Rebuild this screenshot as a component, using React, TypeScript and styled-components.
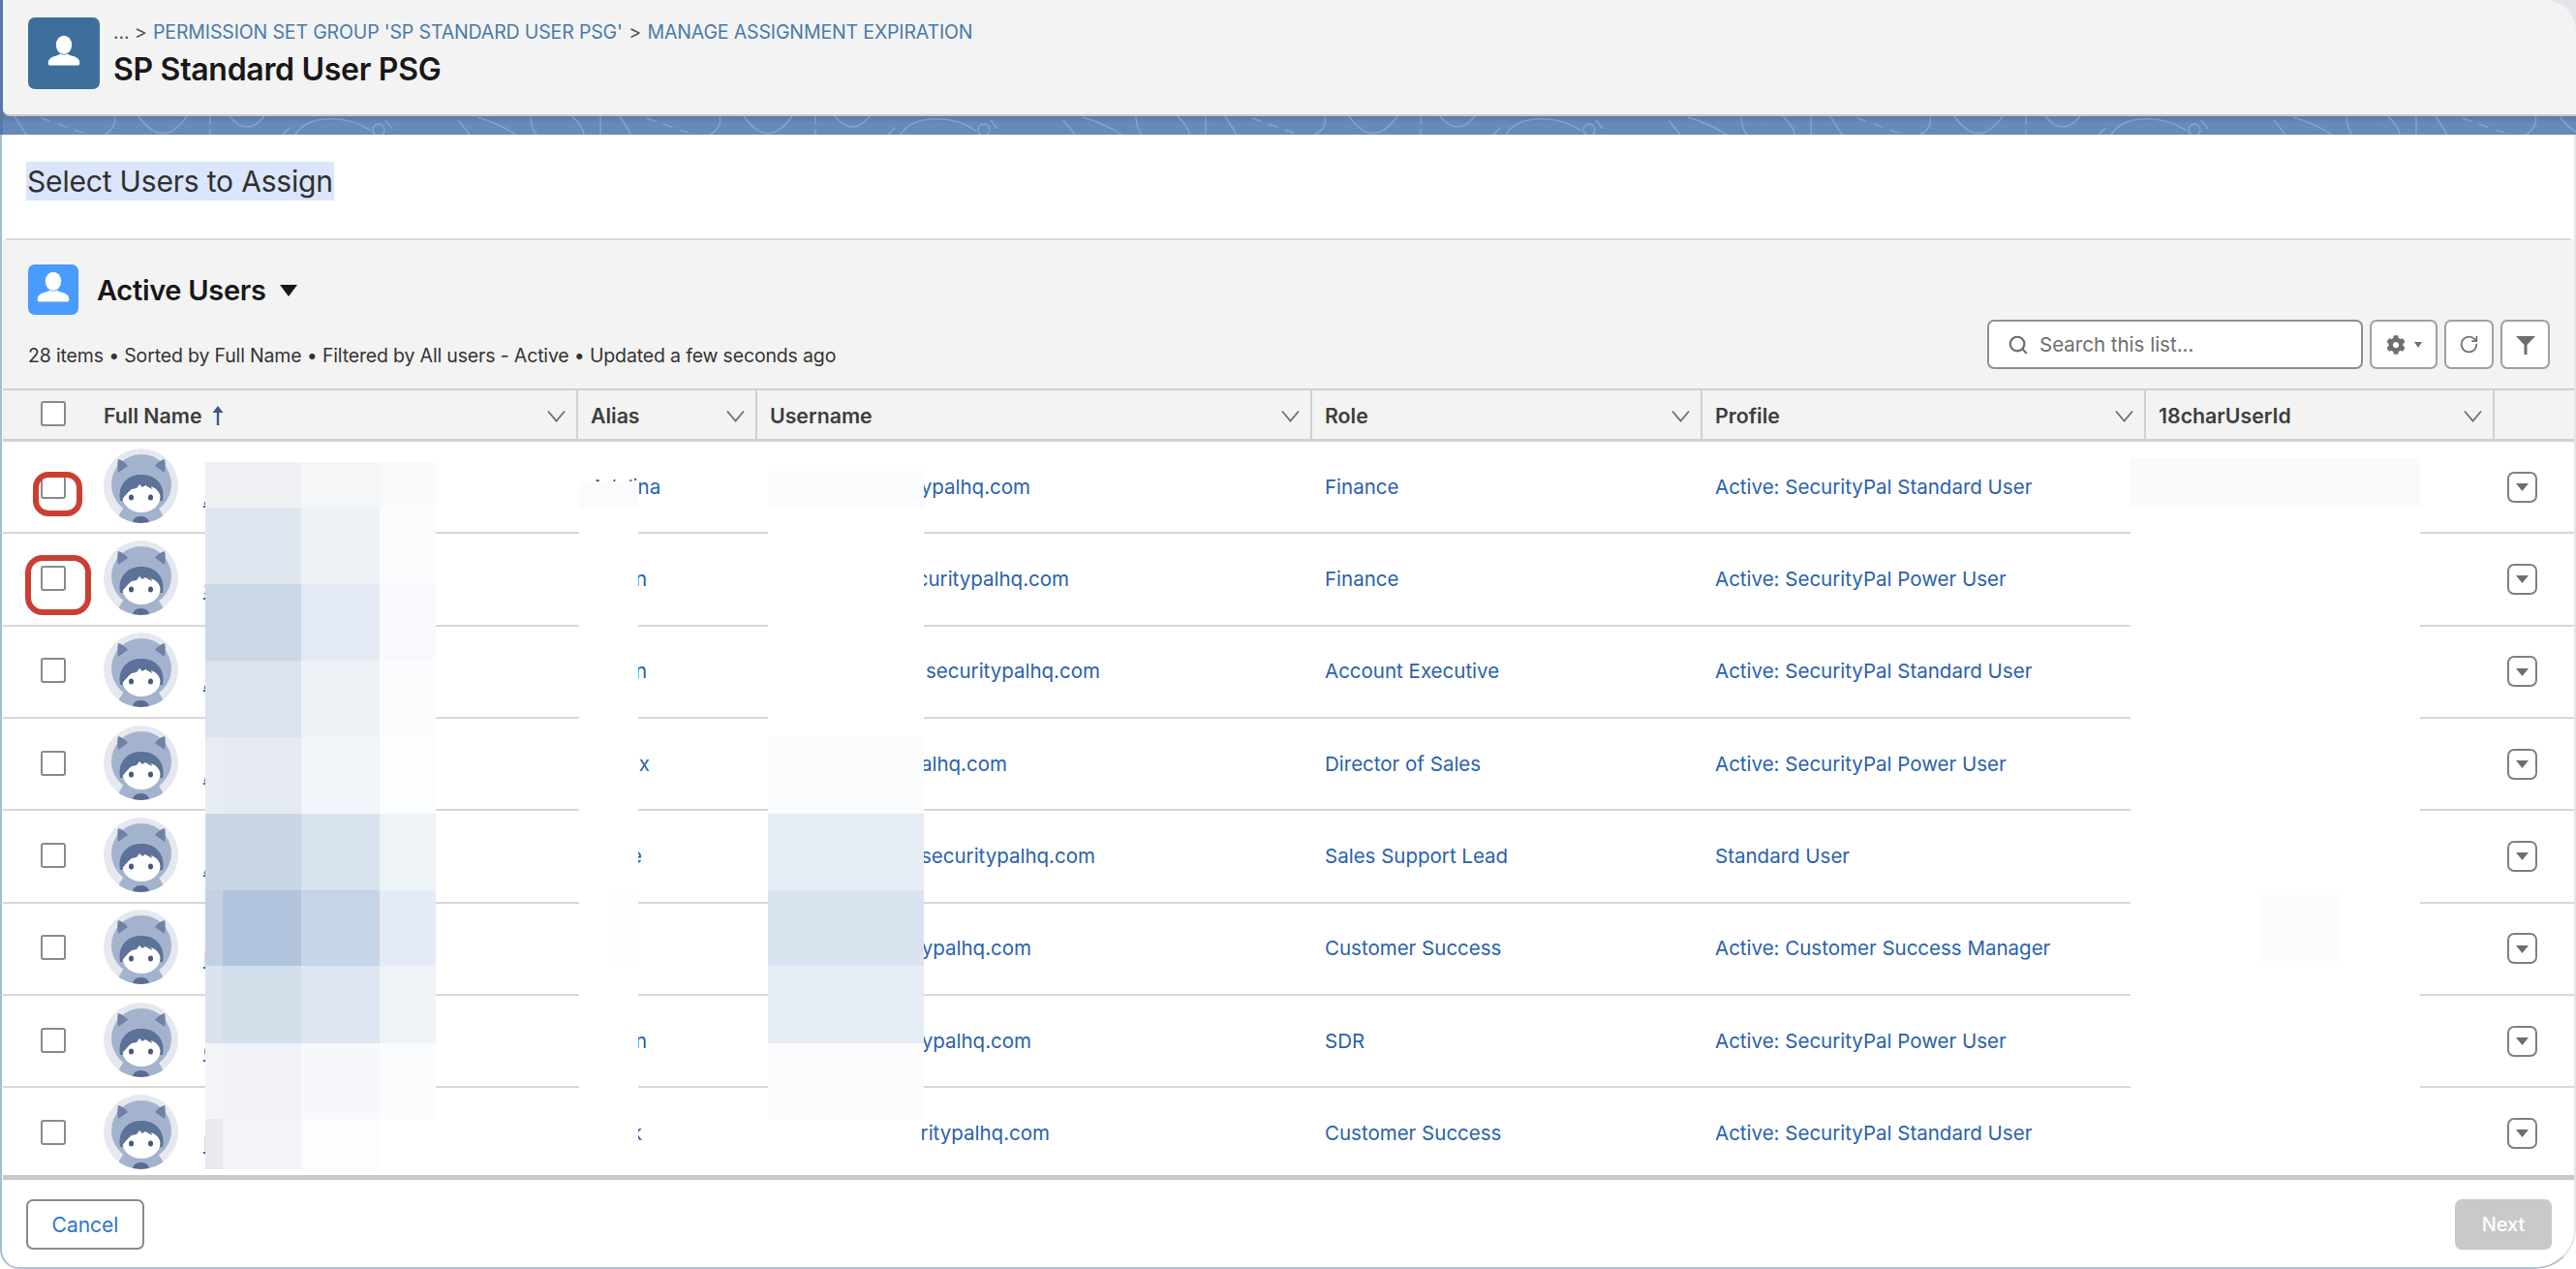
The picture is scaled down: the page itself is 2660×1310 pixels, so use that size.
import * as React from 'react';
import styled, { createGlobalStyle } from 'styled-components';
import { Search, RotateCw } from 'lucide-react';
import { FaCog } from 'react-icons/fa';

const COLUMNS = '94px 500px 185px 573px 403px 458px 360px 1fr';

const GlobalStyle = createGlobalStyle`
  html, body {
    margin: 0;
    padding: 0;
    background: #fff;
  }
  * {
    box-sizing: border-box;
  }
`;

const Page = styled.div`
  position: relative;
  width: 2660px;
  height: 1310px;
  overflow: hidden;
  background: #fff;
  font-family: Inter, 'Liberation Sans', sans-serif;
  color: #181818;
`;

const Band = styled.div`
  border-left: 3px solid #5478aa;
  background: linear-gradient(to bottom, #e4e4ea 0, #e4e4ea 40px, #5a7cab 40px);
`;

const PageHeader = styled.header`
  display: flex;
  gap: 14px;
  height: 120px;
  padding: 18px 0 0 26px;
  background: #f3f3f3;
  border-bottom: 2px solid #c9c9c9;
  border-radius: 0 32px 0 7px;
`;

const RecordIcon = styled.div`
  display: flex;
  align-items: center;
  justify-content: center;
  width: 74px;
  height: 74px;
  border-radius: 7px;
  background: #3e6f9b;
`;

const HeaderText = styled.div`
  display: flex;
  flex-direction: column;
  gap: 9px;
  padding-top: 3px;
`;

const Crumbs = styled.div`
  display: flex;
  gap: 6.5px;
  font-size: 19.5px;
  line-height: 24px;
  color: #555;
  letter-spacing: -0.14px;
`;

const CrumbLink = styled.span`
  color: #4a7aa8;
`;

const PageTitle = styled.h1`
  margin: 0;
  font-size: 32px;
  line-height: 36px;
  font-weight: 600;
  letter-spacing: -0.3px;
`;

const Strip = styled.svg`
  display: block;
  width: 100%;
  height: 19px;
  background: linear-gradient(to bottom, #587aa6, #678abb 40%);
`;

const Main = styled.main`
  display: flex;
  flex-direction: column;
  height: 1171px;
  border-left: 2px solid #a8bbd8;
  border-right: 2px solid #e4e4ea;
  border-bottom: 2px solid #b5c1d8;
  border-radius: 0 0 42px 20px;
  overflow: hidden;
`;

const HeadingRow = styled.div`
  display: flex;
  align-items: center;
  flex: none;
  height: 107px;
  padding: 0 0 11px 25px;
`;

const Heading = styled.h2`
  margin: 0;
  height: 40px;
  padding: 0 1px;
  background: #dbe5fb;
  color: #303030;
  font-size: 30px;
  line-height: 40px;
  font-weight: 400;
  letter-spacing: -0.18px;
`;

const ListCard = styled.section`
  display: flex;
  flex-direction: column;
  flex: 1;
  min-height: 0;
  margin-left: 1px;
  border-top: 2px solid #d8d8d8;
  border-radius: 6px 6px 0 0;
`;

const ListTop = styled.div`
  display: flex;
  flex-direction: column;
  justify-content: space-between;
  flex: none;
  height: 153px;
  padding: 25px 25px 20px 26px;
  background: #f3f3f3;
`;

const TitleRow = styled.div`
  display: flex;
  align-items: center;
`;

const ListIcon = styled.div`
  display: flex;
  align-items: center;
  justify-content: center;
  width: 52px;
  height: 52px;
  margin-right: 19px;
  border-radius: 7px;
  background: #4a9bff;
`;

const ListName = styled.div`
  font-size: 29px;
  font-weight: 600;
  letter-spacing: -0.3px;
  margin-right: 14px;
`;

const Caret = styled.svg<{ $size: number }>`
  display: block;
  width: ${(p) => p.$size}px;
  height: ${(p) => p.$size}px;
`;

const MetaRow = styled.div`
  display: flex;
  align-items: flex-end;
  justify-content: space-between;
`;

const Meta = styled.div`
  font-size: 19.5px;
  line-height: 28px;
  color: #333;
  letter-spacing: -0.16px;
`;

const Tools = styled.div`
  display: flex;
  gap: 7px;
`;

const SearchBox = styled.div`
  display: flex;
  align-items: center;
  gap: 11px;
  width: 388px;
  height: 51px;
  padding-left: 19px;
  background: #fff;
  border: 2px solid #8f8f8f;
  border-radius: 7px;
  color: #706e6b;
  font-size: 20.500px;
`;

const ToolButton = styled.div<{ $width: number }>`
  display: flex;
  align-items: center;
  justify-content: center;
  gap: 9px;
  width: ${(p) => p.$width}px;
  height: 51px;
  background: #fff;
  border: 2px solid #a0a0a0;
  border-radius: 7px;
  color: #706e6b;
`;

const TableHead = styled.div`
  display: grid;
  grid-template-columns: ${COLUMNS};
  flex: none;
  height: 55px;
  background: #f3f3f3;
  border-top: 2px solid #d0d0d0;
  border-bottom: 3px solid #d0d0d0;
`;

const HeadCell = styled.div<{ $plain?: boolean; $first?: boolean }>`
  display: flex;
  align-items: center;
  justify-content: space-between;
  padding: 2px 11px 0 ${(p) => (p.$first ? 10 : 13)}px;
  border-right: ${(p) => (p.$plain ? 'none' : '2px solid #d0d0d0')};
  font-size: 21.300px;
  font-weight: 600;
  color: #3e3e3c;
`;

const HeadLabel = styled.span`
  display: flex;
  align-items: center;
  gap: 9px;
`;

const CheckCell = styled.div`
  display: flex;
  align-items: center;
  justify-content: center;
  padding-left: 10px;
`;

const Checkbox = styled.span`
  display: block;
  width: 26px;
  height: 26px;
  margin-top: -2px;
  background: #fff;
  border: 2px solid #8a8a8a;
  border-radius: 3px;
`;

const TableBody = styled.div`
  flex: none;
  height: 757px;
  overflow: hidden;
`;

const Row = styled.div`
  display: grid;
  grid-template-columns: ${COLUMNS};
  height: 95.33px;
  border-bottom: 2px solid #d8d8d8;
`;

const NameCell = styled.div`
  display: flex;
  align-items: center;
  gap: 26px;
  padding-left: 10px;
`;

const AvatarArt = styled.svg`
  display: block;
  width: 77px;
  height: 77px;
  flex: none;
  margin-top: -3px;
`;

const NameLink = styled.span`
  margin-top: 22px;
  font-size: 20px;
  color: #2a62ad;
  text-decoration: underline;
`;

const Cell = styled.div`
  display: flex;
  align-items: center;
  min-width: 0;
  padding: 0 0 1px 13px;
  font-size: 20.500px;
  color: #2a62ad;
  white-space: nowrap;
`;

const EndAligned = styled.span<{ $end: number }>`
  display: block;
  width: ${(p) => p.$end}px;
  text-align: right;
`;

const ActionCell = styled.div`
  display: flex;
  align-items: center;
  justify-content: flex-end;
  padding-right: 38px;
`;

const RowAction = styled.div`
  display: flex;
  align-items: center;
  justify-content: center;
  width: 31px;
  height: 32px;
  border: 2px solid #808080;
  border-radius: 7px;
`;

const Footer = styled.footer`
  display: flex;
  align-items: center;
  justify-content: space-between;
  flex: 1;
  padding: 2px 23px 0 24px;
  border-top: 5px solid #c9c9c9;
  background: #fff;
`;

const CancelButton = styled.div`
  display: flex;
  align-items: center;
  justify-content: center;
  width: 122px;
  height: 52px;
  border: 2px solid #8a8a8a;
  border-radius: 7px;
  color: #2a75d3;
  font-size: 21px;
`;

const NextButton = styled.div`
  display: flex;
  align-items: center;
  justify-content: center;
  width: 100px;
  height: 52px;
  border-radius: 7px;
  background: #c9c9c9;
  color: #fff;
  font-size: 20px;
  font-weight: 500;
`;

// pixelated privacy masks sitting over the table
const Mosaic = styled.div<{ $left: number; $top: number; $cols: string; $rows: string }>`
  position: absolute;
  left: ${(p) => p.$left}px;
  top: ${(p) => p.$top}px;
  display: grid;
  grid-template-columns: ${(p) => p.$cols};
  grid-template-rows: ${(p) => p.$rows};
`;

const MosaicCell = styled.div<{ $tone: string }>`
  background: ${(p) => p.$tone};
`;

// red marks somebody drew over the screenshot
const Mark = styled.div<{ $left: number; $top: number; $w: number; $h: number; $radius: number }>`
  position: absolute;
  left: ${(p) => p.$left}px;
  top: ${(p) => p.$top}px;
  width: ${(p) => p.$w}px;
  height: ${(p) => p.$h}px;
  border: 6px solid #cb3f33;
  border-radius: ${(p) => p.$radius}px;
`;

const masks = [
  {
    left: 212,
    top: 477,
    cols: '18px 81px 81px 58px',
    rows: '47px 79px 79px 79px 79px 79px 78px 80px 78px 52px',
    tones: [
      '#eef0f4', '#eef0f4', '#f4f6f8', '#f9fafb',
      '#e0e7f0', '#e0e7f0', '#eef2f7', '#fafbfd',
      '#cbd8e8', '#cbd8e8', '#e3eaf3', '#f7f9fc',
      '#dae3ee', '#dae3ee', '#edf2f7', '#fbfcfe',
      '#e8ecf3', '#e5eaf2', '#f2f5f9', '#fcfdfe',
      '#c9d6e6', '#c9d6e6', '#d9e3ef', '#eef3f8',
      '#c3d1e3', '#b2c4dd', '#c5d4e6', '#e3ebf4',
      '#d9e2ed', '#d2deea', '#dce5f0', '#eff3f8',
      '#f3f4f8', '#f0f2f7', '#f7f8fb', '#fbfcfd',
      '#e8eaf0', '#f3f4f8', '#fdfdfe', '#ffffff',
    ],
  },
  {
    left: 598,
    top: 497,
    cols: '36px 25px',
    rows: '27px 395px 78px 183px',
    tones: ['#fbfbfb', '#fbfbfb', '#ffffff', '#ffffff', '#ffffff', '#fdfdfe', '#ffffff', '#ffffff'],
  },
  {
    left: 793,
    top: 486,
    cols: '161px',
    rows: '38px 237px 79px 79px 78px 80px 78px',
    tones: ['#fafbfc', '#ffffff', '#f9fbfd', '#e6edf5', '#d9e3ef', '#e6edf5', '#fbfbfd'],
  },
  {
    left: 2200,
    top: 473,
    cols: '132px 85px 82px',
    rows: '50px 401px 68px 162px',
    tones: [
      '#fafafa', '#fafafa', '#fafafa',
      '#ffffff', '#ffffff', '#ffffff',
      '#ffffff', '#fcfcfc', '#ffffff',
      '#ffffff', '#ffffff', '#ffffff',
    ],
  },
];

const rows = [
  { name: 'A', alias: 'Adelina', aliasEnd: 70, mail: 'ypalhq.com', mailEnd: 269, role: 'Finance', profile: 'Active: SecurityPal Standard User' },
  { name: 'S', alias: 'n', aliasEnd: 58, mail: 'curitypalhq.com', mailEnd: 309, role: 'Finance', profile: 'Active: SecurityPal Power User' },
  { name: 'A', alias: 'n', aliasEnd: 58, mail: 'securitypalhq.com', mailEnd: 341, role: 'Account Executive', profile: 'Active: SecurityPal Standard User' },
  { name: 'A', alias: 'x', aliasEnd: 61, mail: 'alhq.com', mailEnd: 245, role: 'Director of Sales', profile: 'Active: SecurityPal Power User' },
  { name: 'A', alias: 'e', aliasEnd: 53, mail: 'securitypalhq.com', mailEnd: 336, role: 'Sales Support Lead', profile: 'Standard User' },
  { name: 'B', alias: '', aliasEnd: 0, mail: 'ypalhq.com', mailEnd: 270, role: 'Customer Success', profile: 'Active: Customer Success Manager' },
  { name: 'C', alias: 'n', aliasEnd: 58, mail: 'ypalhq.com', mailEnd: 270, role: 'SDR', profile: 'Active: SecurityPal Power User' },
  { name: 'B', alias: 'k', aliasEnd: 53, mail: 'ritypalhq.com', mailEnd: 289, role: 'Customer Success', profile: 'Active: SecurityPal Standard User' },
];

const headers = ['Alias', 'Username', 'Role', 'Profile', '18charUserId'];

const PersonIcon = () => (
  <svg width={50} height={50} viewBox="0 0 52 52" fill="#fff">
    <ellipse cx="26" cy="17" rx="8.500" ry="10" />
    <path d="M9 37c0-4 2-6 6-7.500 3-1 6-1.500 7-3 2 1.500 6 1.500 8 0 1 1.500 4 2 7 3 4 1.500 6 3.500 6 7.500 0 1-.8 2-2 2H11c-1.200 0-2-1-2-2z" />
  </svg>
);

const Chevron = () => (
  <svg width="19" height="13" viewBox="0 0 19 13" fill="none" stroke="#6f6f6f" strokeWidth="1.800">
    <path d="M1 1.500l8.500 10 8.500-10" />
  </svg>
);

const SortArrow = () => (
  <svg width="14" height="20" viewBox="0 0 14 20" fill="#3a5a8a">
    <path d="M7 0l5.500 7H8.200v13H5.800V7H1.500z" />
  </svg>
);

const Avatar = () => (
  <AvatarArt viewBox="0 0 77 77">
    <defs>
      <clipPath id="avatar-round">
        <circle cx="38.500" cy="38.500" r="38.500" />
      </clipPath>
    </defs>
    <g clipPath="url(#avatar-round)">
      <rect width="77" height="77" fill="#e6e8ef" />
      <circle cx="39" cy="37" r="31" fill="#a3b2cd" />
      <path d="M15 25c-1-5-1-10 0-14 4 1 8 4 10 7z" fill="#6f82a6" />
      <path d="M63 25c1-5 1-10 0-14-4 1-8 4-10 7z" fill="#6f82a6" />
      <path d="M20 62h37l9 15H11z" fill="#a3b2cd" />
      <path d="M30 77c0-4 3-7 8.500-7S47 73 47 77z" fill="#596d93" />
      <path d="M17 54C14 37 25 27 39 27s25 10 22 27z" fill="#5c7299" />
      <ellipse cx="39" cy="50" rx="19.500" ry="16" fill="#fff" />
      <path d="M18 54c0-10 2-20 12-25 6-2 14-2 20 1 8 5 11 13 10 22-1-4-4-9-7-11l-4-2 1 3-7-4-3 2-3-3-3 4-5 1c-4 3-8 8-11 12z" fill="#5c7299" />
      <ellipse cx="28.500" cy="50.500" rx="2.500" ry="3" fill="#47587c" />
      <ellipse cx="48.500" cy="50.500" rx="2.500" ry="3" fill="#47587c" />
    </g>
  </AvatarArt>
);

export default function App() {
  return (
    <Page>
      <GlobalStyle />
      <Band>
        <PageHeader>
          <RecordIcon>
            <PersonIcon />
          </RecordIcon>
          <HeaderText>
            <Crumbs>
              <span>... &gt;</span>
              <CrumbLink>PERMISSION SET GROUP 'SP STANDARD USER PSG'</CrumbLink>
              <span>&gt;</span>
              <CrumbLink>MANAGE ASSIGNMENT EXPIRATION</CrumbLink>
            </Crumbs>
            <PageTitle>SP Standard User PSG</PageTitle>
          </HeaderText>
        </PageHeader>
        <Strip>
          <defs>
            <pattern id="swirl" width="625" height="19" patternUnits="userSpaceOnUse">
              <g fill="none" stroke="#fff" strokeOpacity="0.22" strokeWidth="1.500">
                <path d="M12 0l12 19" />
                <path d="M40 2l45 16" strokeDasharray="10 8" />
                <path d="M115 0q3 12-10 19" />
                <path d="M140 0q25 35 50 0" />
                <path d="M214 0v19" strokeDasharray="8 5" />
                <path d="M234 0q18 22 36 0" />
                <path d="M296 12l-7 7" />
                <path d="M302 19c13-21 53-21 78-4" />
                <circle cx="388" cy="14" r="6" />
                <path d="M395 4l7 9" />
                <path d="M470 4l12 15M490 1c20 6 34 14 40 18M545 0c0 8 2 14 6 19M588 0c8 8 12 14 12 19M617 0v19" />
              </g>
            </pattern>
          </defs>
          <rect width="100%" height="19" fill="url(#swirl)" />
        </Strip>
      </Band>
      <Main>
        <HeadingRow>
          <Heading>Select Users to Assign</Heading>
        </HeadingRow>
        <ListCard>
          <ListTop>
            <TitleRow>
              <ListIcon>
                <PersonIcon />
              </ListIcon>
              <ListName>Active Users</ListName>
              <Caret $size={18} viewBox="0 0 18 18" fill="#181818">
                <path d="M0 4h18l-9 12z" />
              </Caret>
            </TitleRow>
            <MetaRow>
              <Meta>28 items • Sorted by Full Name • Filtered by All users - Active • Updated a few seconds ago</Meta>
              <Tools>
                <SearchBox>
                  <Search size={22} strokeWidth={2.400} />
                  Search this list...
                </SearchBox>
                <ToolButton $width={70}>
                  <FaCog size={20} />
                  <Caret $size={8} viewBox="0 0 8 8" fill="#706e6b">
                    <path d="M0 1h8L4 7z" />
                  </Caret>
                </ToolButton>
                <ToolButton $width={51}>
                  <RotateCw size={21} strokeWidth={2} />
                </ToolButton>
                <ToolButton $width={51}>
                  <Caret $size={22} viewBox="0 0 22 22" fill="#706e6b">
                    <path d="M1 2h20l-8.500 9v10h-3V11z" />
                  </Caret>
                </ToolButton>
              </Tools>
            </MetaRow>
          </ListTop>
          <TableHead>
            <CheckCell>
              <Checkbox />
            </CheckCell>
            <HeadCell $first>
              <HeadLabel>
                Full Name
                <SortArrow />
              </HeadLabel>
              <Chevron />
            </HeadCell>
            {headers.map((label) => (
              <HeadCell key={label}>
                {label}
                <Chevron />
              </HeadCell>
            ))}
            <HeadCell $plain />
          </TableHead>
          <TableBody>
            {rows.map((row, key) => (
              <Row key={key}>
                <CheckCell>
                  <Checkbox />
                </CheckCell>
                <NameCell>
                  <Avatar />
                  <NameLink>{row.name}</NameLink>
                </NameCell>
                <Cell>
                  <EndAligned $end={row.aliasEnd}>{row.alias}</EndAligned>
                </Cell>
                <Cell>
                  <EndAligned $end={row.mailEnd}>{row.mail}</EndAligned>
                </Cell>
                <Cell>{row.role}</Cell>
                <Cell>{row.profile}</Cell>
                <Cell />
                <ActionCell>
                  <RowAction>
                    <Caret $size={13} viewBox="0 0 13 13" fill="#706e6b">
                      <path d="M0 3h13L6.500 11z" />
                    </Caret>
                  </RowAction>
                </ActionCell>
              </Row>
            ))}
          </TableBody>
          <Footer>
            <CancelButton>Cancel</CancelButton>
            <NextButton>Next</NextButton>
          </Footer>
        </ListCard>
      </Main>
      {masks.map((mask) => (
        <Mosaic key={mask.left} $left={mask.left} $top={mask.top} $cols={mask.cols} $rows={mask.rows}>
          {mask.tones.map((tone, key) => (
            <MosaicCell key={key} $tone={tone} />
          ))}
        </Mosaic>
      ))}
      <Mark $left={34} $top={487} $w={51} $h={46} $radius={16} />
      <Mark $left={26} $top={573} $w={68} $h={62} $radius={18} />
    </Page>
  );
}
